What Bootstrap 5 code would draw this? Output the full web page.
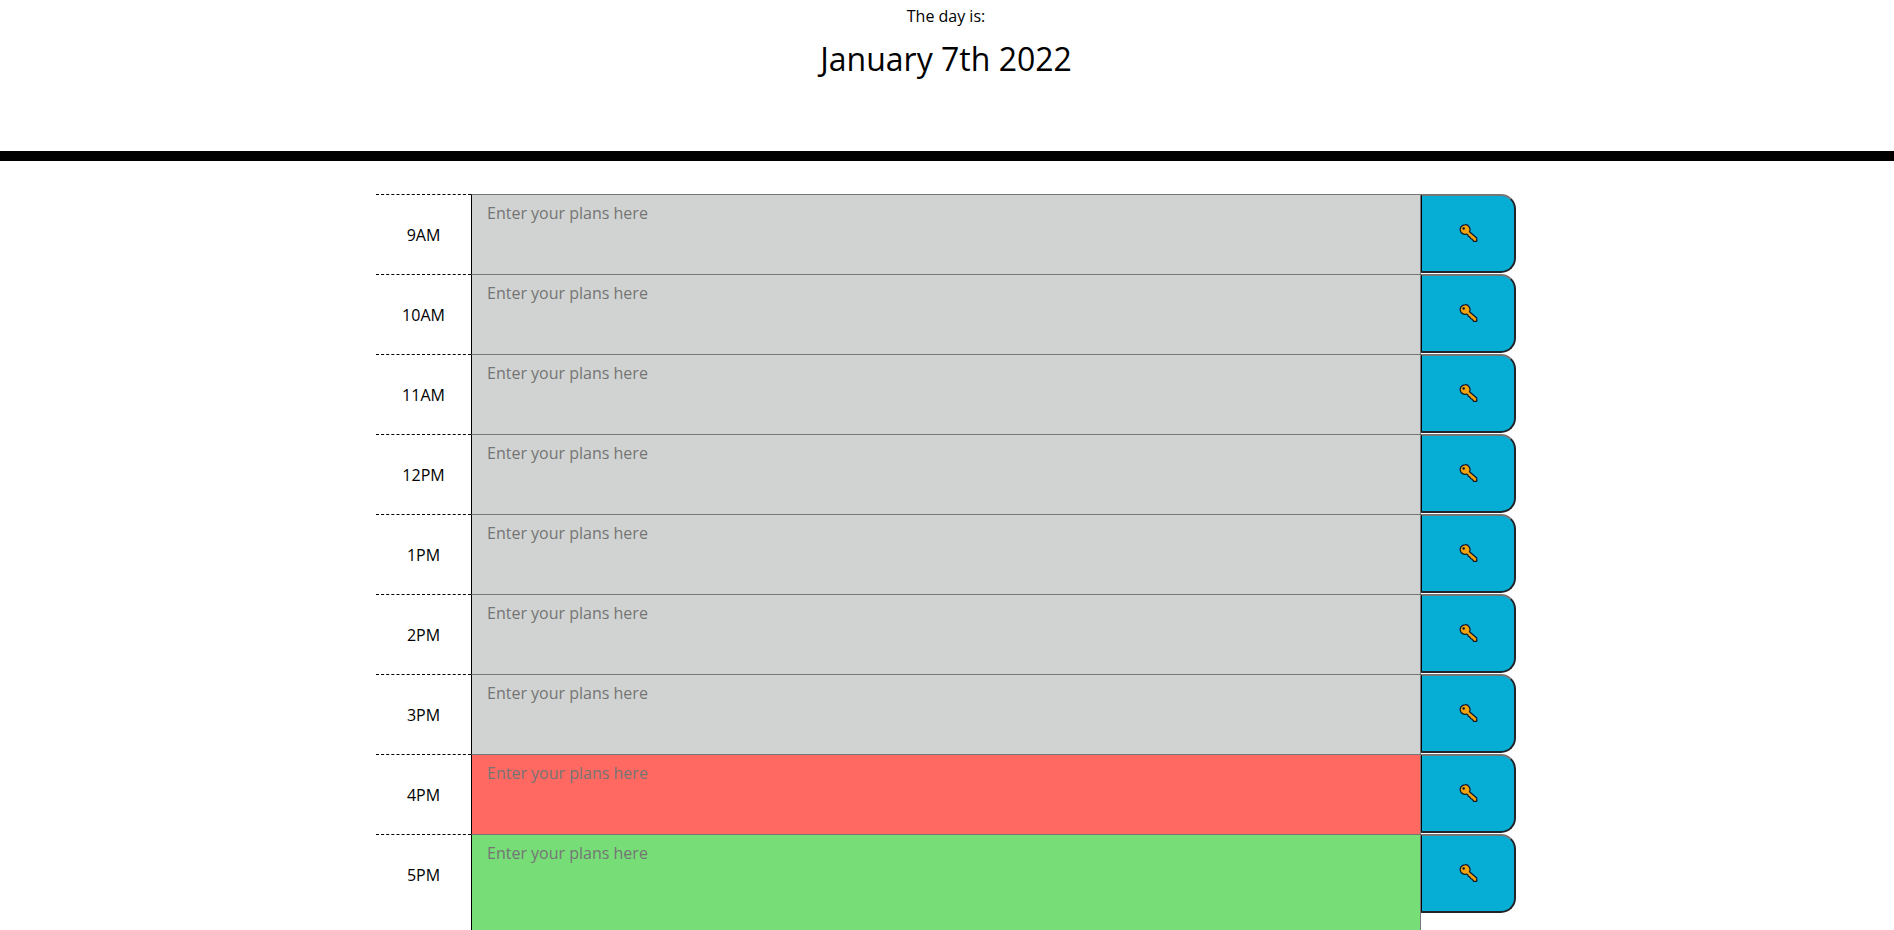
<!DOCTYPE html>
<html lang="en">
<head>
<meta charset="utf-8">
<meta name="viewport" content="width=device-width, initial-scale=1">
<title>Work Day Scheduler</title>
<link rel="stylesheet" href="https://cdn.jsdelivr.net/npm/bootstrap@5.3.0/dist/css/bootstrap.min.css">
<style>
  body { font-family: "Open Sans", sans-serif; font-weight: 400; line-height: 1; color: #000; }
  .day-header { height: 161px; padding: 4px 2px 0 0; border-bottom: 10px solid #000; }
  .day-label { font-size: 16px; line-height: 24px; }
  .day-date { font-size: 32px; line-height: 48px; font-weight: 400; margin-top: 7px; }
  .planner-area { padding: 33px 2px 0 0; }
  .planner { max-width: 1140px; }
  .planner .row { --bs-gutter-x: 0; }
  .hour { height: 80px; border-top: 1px dashed #000; line-height: 24px; }
  .plans { height: 80px; padding: 6px 15px; font-size: 16px; line-height: 24px; font-weight: 400; resize: none; overflow: hidden;
    border: 1px solid #767676; border-left-color: #000; border-bottom: 0; border-radius: 0; outline-offset: -2px; }
  .plans::placeholder { color: #757575; opacity: 1; }
  .past { background: #d1d3d2; }
  .present { background: #ff6961; }
  .future { background: #77dd77; height: 96px; }
  .save { height: 79px; padding: 0; background: #06aed5; border: 2px solid #212529; border-top-color: #767676; border-left: 1px solid #000; border-radius: 0 15px 15px 0; }
  .save:hover { background: #0698bb; }
</style>
</head>
<body class="overflow-hidden">
<svg class="d-none" aria-hidden="true">
  <symbol id="key" viewBox="0 0 20 20">
    <path d="M6 .8a5 5 0 1 0 1.9 9.7l1.5 1.1.6 1.5 1.6.6.5 1.6 1.6.6 1.8 2.3h3.2v-3.4L11 8.1A5 5 0 0 0 6 .8z" fill="#f0a30a" stroke="#10182e" stroke-width="1.3" stroke-linejoin="round"/>
    <circle cx="4.900" cy="4.800" r="1.300" fill="#10182e"/>
  </symbol>
</svg>
<header class="day-header text-center">
  <p class="day-label mb-0">The day is:</p>
  <h1 class="day-date mb-0">January 7th 2022</h1>
</header>
<main class="planner-area">
  <div class="planner container-fluid p-0" id="planner"></div>
</main>
<script src="https://cdn.jsdelivr.net/npm/bootstrap@5.3.0/dist/js/bootstrap.bundle.min.js"></script>
<script>
  const currentHour = 16;
  const planner = document.getElementById('planner');
  for (let h = 9; h <= 17; h++) {
    const name = (h > 12 ? h - 12 : h) + (h < 12 ? 'AM' : 'PM');
    const state = h < currentHour ? 'past' : h === currentHour ? 'present' : 'future';
    planner.insertAdjacentHTML('beforeend', `
      <div class="row">
        <label for="plans-${h}" class="hour col-1 d-flex align-items-center justify-content-center">${name}</label>
        <textarea id="plans-${h}" class="plans col-10 ${state}" placeholder="Enter your plans here"></textarea>
        <button type="button" class="save col-1 d-flex align-items-center justify-content-center" aria-label="Save ${name}">
          <svg width="19" height="19" aria-hidden="true"><use href="#key"/></svg>
        </button>
      </div>`);
  }
</script>
</body>
</html>
